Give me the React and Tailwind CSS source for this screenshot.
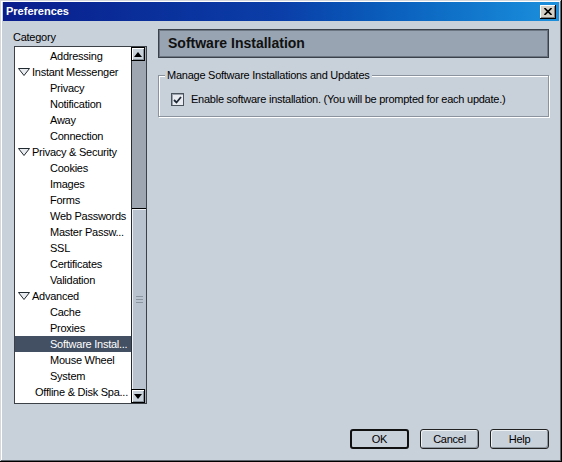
import React from "react";

const font = { fontFamily: '"Liberation Sans", Arial, sans-serif' };

function Tri() {
  return (
    <svg width="12" height="8" viewBox="0 0 12 8" className="shrink-0">
      <path d="M0.5 0.5 H11.5 L6 7.5 Z" fill="#e8ecf0" stroke="#202830" strokeWidth="1" />
    </svg>
  );
}

const items = [
  { t: "Addressing", k: "c" },
  { t: "Instant Messenger", k: "p" },
  { t: "Privacy", k: "c" },
  { t: "Notification", k: "c" },
  { t: "Away", k: "c" },
  { t: "Connection", k: "c" },
  { t: "Privacy & Security", k: "p" },
  { t: "Cookies", k: "c" },
  { t: "Images", k: "c" },
  { t: "Forms", k: "c" },
  { t: "Web Passwords", k: "c" },
  { t: "Master Passw...", k: "c" },
  { t: "SSL", k: "c" },
  { t: "Certificates", k: "c" },
  { t: "Validation", k: "c" },
  { t: "Advanced", k: "p" },
  { t: "Cache", k: "c" },
  { t: "Proxies", k: "c" },
  { t: "Software Instal...", k: "c", sel: true },
  { t: "Mouse Wheel", k: "c" },
  { t: "System", k: "c" },
  { t: "Offline & Disk Spa...", k: "o" },
];

function Row({ it }) {
  const base = "h-[16px] flex items-center text-[11px] leading-[16px] whitespace-nowrap";
  const color = it.sel ? "bg-[#434f62] text-white" : "text-black";
  if (it.k === "p")
    return (
      <div className={`${base} ${color} pl-[3px] gap-[2px]`}>
        <Tri />
        <span>{it.t}</span>
      </div>
    );
  if (it.k === "o") return <div className={`${base} ${color} pl-[20px]`}>{it.t}</div>;
  return <div className={`${base} ${color} pl-[35px]`}>{it.t}</div>;
}

function Arrow({ up }) {
  return (
    <div className="h-[14px] w-[14px] bg-[#c8d0da] border border-black shadow-[inset_1px_1px_0_#fff,inset_-1px_-1px_0_#8a929c] flex items-center justify-center">
      <svg width="8" height="5" viewBox="0 0 8 5">
        {up ? <path d="M0 5 L4 0 L8 5 Z" fill="#000" /> : <path d="M0 0 L8 0 L4 5 Z" fill="#000" />}
      </svg>
    </div>
  );
}

function Btn({ children, def }) {
  return (
    <div
      className={`w-[59px] h-[20px] rounded-[3px] bg-[#c8d0da] flex items-center justify-center text-[11px] text-black ${
        def ? "border-2 border-[#111]" : "border border-[#222] shadow-[inset_1px_1px_0_#eef1f4,inset_-1px_-1px_0_#8d959f]"
      }`}
    >
      {children}
    </div>
  );
}

export default function App() {
  return (
    <div
      style={font}
      className="w-[562px] h-[462px] bg-[#c8d0da] flex flex-col pt-[2px] px-[3px] tracking-[-0.25px] shadow-[inset_-1px_-1px_0_#000,inset_1px_1px_0_#d4d8dc,inset_-2px_-2px_0_#5f666e,inset_2px_2px_0_#fff]"
    >
      {/* title bar */}
      <div className="h-[19px] shrink-0 bg-gradient-to-r from-[#0a1d8c] via-[#0b3ea8] to-[#1c90dc] flex items-center pl-[3px] pr-[3px] justify-between">
        <span className="text-white font-bold text-[11px] leading-none tracking-normal">Preferences</span>
        <div className="w-[16px] h-[14px] bg-[#d4d0c8] shadow-[inset_-1px_-1px_0_#000,inset_1px_1px_0_#fff,inset_-2px_-2px_0_#808080] flex items-center justify-center">
          <svg width="8" height="7" viewBox="0 0 8 7">
            <path d="M0.5 0 L7.5 7 M7.5 0 L0.5 7" stroke="#000" strokeWidth="1.6" />
          </svg>
        </div>
      </div>

      {/* body */}
      <div className="flex-1 flex pl-[11px] pr-[10px] pt-[9px]">
        {/* left column */}
        <div className="w-[133px] flex flex-col">
          <div className="h-[16px] text-[11px] leading-[14px] text-black -ml-px">Category</div>
          <div className="h-[358px] border border-[#3c4148] bg-white flex">
            <div className="flex-1 flex flex-col pt-px">
              {items.map((it, i) => (
                <Row key={i} it={it} />
              ))}
            </div>
            <div className="w-[15px] flex flex-col border-l border-[#2a2e34] bg-[#a2abb5]">
              <div className="-ml-px">
                <Arrow up />
              </div>
              <div className="h-[147px] bg-[#9ea7b1]" />
              <div className="flex-1 bg-[#b9c3cf] border-t border-black shadow-[inset_1px_1px_0_#eef2f6] flex items-center justify-center">
                <div className="flex flex-col gap-[2px]">
                  <div className="w-[7px] h-px bg-[#8b95a0]" />
                  <div className="w-[7px] h-px bg-[#8b95a0]" />
                  <div className="w-[7px] h-px bg-[#8b95a0]" />
                </div>
              </div>
              <div className="-ml-px">
                <Arrow />
              </div>
            </div>
          </div>
        </div>

        {/* right column */}
        <div className="flex-1 ml-[11px] flex flex-col -mt-px">
          <div className="h-[29px] border border-[#3a414a] shadow-[inset_1px_1px_0_#6c7582,inset_-1px_-1px_0_#6c7582] bg-[#98a4b2] flex items-center pl-[9px]">
            <span className="text-[14px] font-bold text-[#111] tracking-normal">Software Installation</span>
          </div>
          <div className="mt-[17px] relative h-[42px] border border-[#8a939e] shadow-[1px_1px_0_#fff,inset_1px_1px_0_#fff] flex items-center pl-[12px] pt-[7px]">
            <div className="absolute left-[6px] -top-[8px] px-[2px] bg-[#c8d0da] text-[11px] leading-[14px] text-black">
              Manage Software Installations and Updates
            </div>
            <div className="w-[13px] h-[13px] bg-[#e8ecf0] border border-[#4a525c] shadow-[inset_1px_1px_0_#9aa3ad] flex items-center justify-center">
              <svg width="9" height="8" viewBox="0 0 9 8">
                <path d="M1 4 L3.5 6.5 L8 1" stroke="#1e2835" strokeWidth="1.8" fill="none" />
              </svg>
            </div>
            <span className="ml-[7px] text-[11px] text-black">
              Enable software installation. (You will be prompted for each update.)
            </span>
          </div>
        </div>
      </div>

      {/* footer */}
      <div className="h-[20px] shrink-0 mb-[13px] flex justify-end gap-[11px] pr-[10px]">
        <Btn def>OK</Btn>
        <Btn>Cancel</Btn>
        <Btn>Help</Btn>
      </div>
    </div>
  );
}
